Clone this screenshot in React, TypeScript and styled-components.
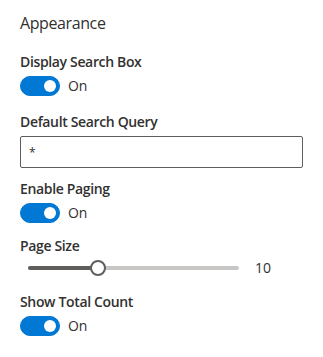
import React, { useState } from 'react';
import styled, { createGlobalStyle } from 'styled-components';

const GlobalStyle = createGlobalStyle`
  body {
    margin: 0;
    background: #ffffff;
    font-family: "Open Sans", "Noto Sans", sans-serif;
    color: #323130;
  }
`;

const Pane = styled.div`
  display: flex;
  flex-direction: column;
  padding: 12px 20px 0 20px;
  width: 323px;
  box-sizing: border-box;
`;

const GroupHeader = styled.div`
  font-size: 16px;
  line-height: 22px;
  font-weight: 400;
  letter-spacing: -0.4px;
  margin-bottom: 18px;
`;

const Field = styled.div<{ $gap?: number }>`
  display: flex;
  flex-direction: column;
  margin-bottom: ${(p) => p.$gap ?? 16}px;
`;

const Label = styled.label<{ $tight?: boolean }>`
  font-size: 14px;
  line-height: 20px;
  font-weight: 600;
  letter-spacing: -0.35px;
  margin-bottom: ${(p) => (p.$tight ? 0 : 4)}px;
`;

const ToggleRow = styled.div`
  display: flex;
  align-items: center;
  gap: 8px;
  height: 20px;
`;

const Track = styled.button<{ $on: boolean }>`
  position: relative;
  width: 40px;
  height: 20px;
  border-radius: 10px;
  border: 1px solid ${(p) => (p.$on ? '#0078d4' : '#605e5c')};
  background: ${(p) => (p.$on ? '#0078d4' : '#ffffff')};
  padding: 0;
  cursor: pointer;
  box-sizing: border-box;
`;

const Knob = styled.span<{ $on: boolean }>`
  position: absolute;
  top: 3px;
  left: ${(p) => (p.$on ? '23px' : '3px')};
  width: 12px;
  height: 12px;
  border-radius: 50%;
  background: ${(p) => (p.$on ? '#ffffff' : '#605e5c')};
`;

const ToggleText = styled.span`
  font-size: 14px;
  line-height: 20px;
  letter-spacing: -0.2px;
`;

const TextInput = styled.input`
  height: 32px;
  box-sizing: border-box;
  border: 1px solid #605e5c;
  border-radius: 2px;
  padding: 0 8px;
  font-family: inherit;
  font-size: 12px;
  color: #323130;
  outline: none;
`;

const SliderRow = styled.div`
  display: flex;
  align-items: center;
  height: 24px;
  padding-left: 8px;
`;

const SliderBox = styled.div`
  position: relative;
  flex: 1;
  height: 24px;
`;

const SliderRail = styled.div`
  position: absolute;
  left: 0;
  right: 0;
  top: 10px;
  height: 4px;
  border-radius: 4px;
  background: #c8c6c4;
`;

const SliderFill = styled.div`
  position: absolute;
  left: 0;
  top: 10px;
  height: 4px;
  border-radius: 4px;
  background: #605e5c;
`;

const Thumb = styled.span`
  position: absolute;
  top: 4px;
  width: 16px;
  height: 16px;
  margin-left: -8px;
  box-sizing: border-box;
  border-radius: 50%;
  border: 2px solid #605e5c;
  background: #ffffff;
`;

const SliderValue = styled.span`
  width: 48px;
  margin-left: 16px;
  font-size: 14px;
  line-height: 20px;
`;

const Toggle: React.FC<{ initial?: boolean }> = ({ initial = true }) => {
  const [on, setOn] = useState(initial);
  return (
    <ToggleRow>
      <Track $on={on} onClick={() => setOn(!on)}>
        <Knob $on={on} />
      </Track>
      <ToggleText>{on ? 'On' : 'Off'}</ToggleText>
    </ToggleRow>
  );
};

const App: React.FC = () => {
  const pageSize = 10;
  const pct = 33;

  return (
    <>
      <GlobalStyle />
      <Pane>
        <GroupHeader>Appearance</GroupHeader>
        <Field>
          <Label>Display Search Box</Label>
          <Toggle />
        </Field>
        <Field $gap={11}>
          <Label>Default Search Query</Label>
          <TextInput defaultValue="*" />
        </Field>
        <Field $gap={13}>
          <Label>Enable Paging</Label>
          <Toggle />
        </Field>
        <Field $gap={12}>
          <Label $tight>Page Size</Label>
          <SliderRow>
            <SliderBox>
              <SliderRail />
              <SliderFill style={{ width: `${pct}%` }} />
              <Thumb style={{ left: `${pct}%` }} />
            </SliderBox>
            <SliderValue>{pageSize}</SliderValue>
          </SliderRow>
        </Field>
        <Field>
          <Label>Show Total Count</Label>
          <Toggle />
        </Field>
      </Pane>
    </>
  );
};

export default App;
